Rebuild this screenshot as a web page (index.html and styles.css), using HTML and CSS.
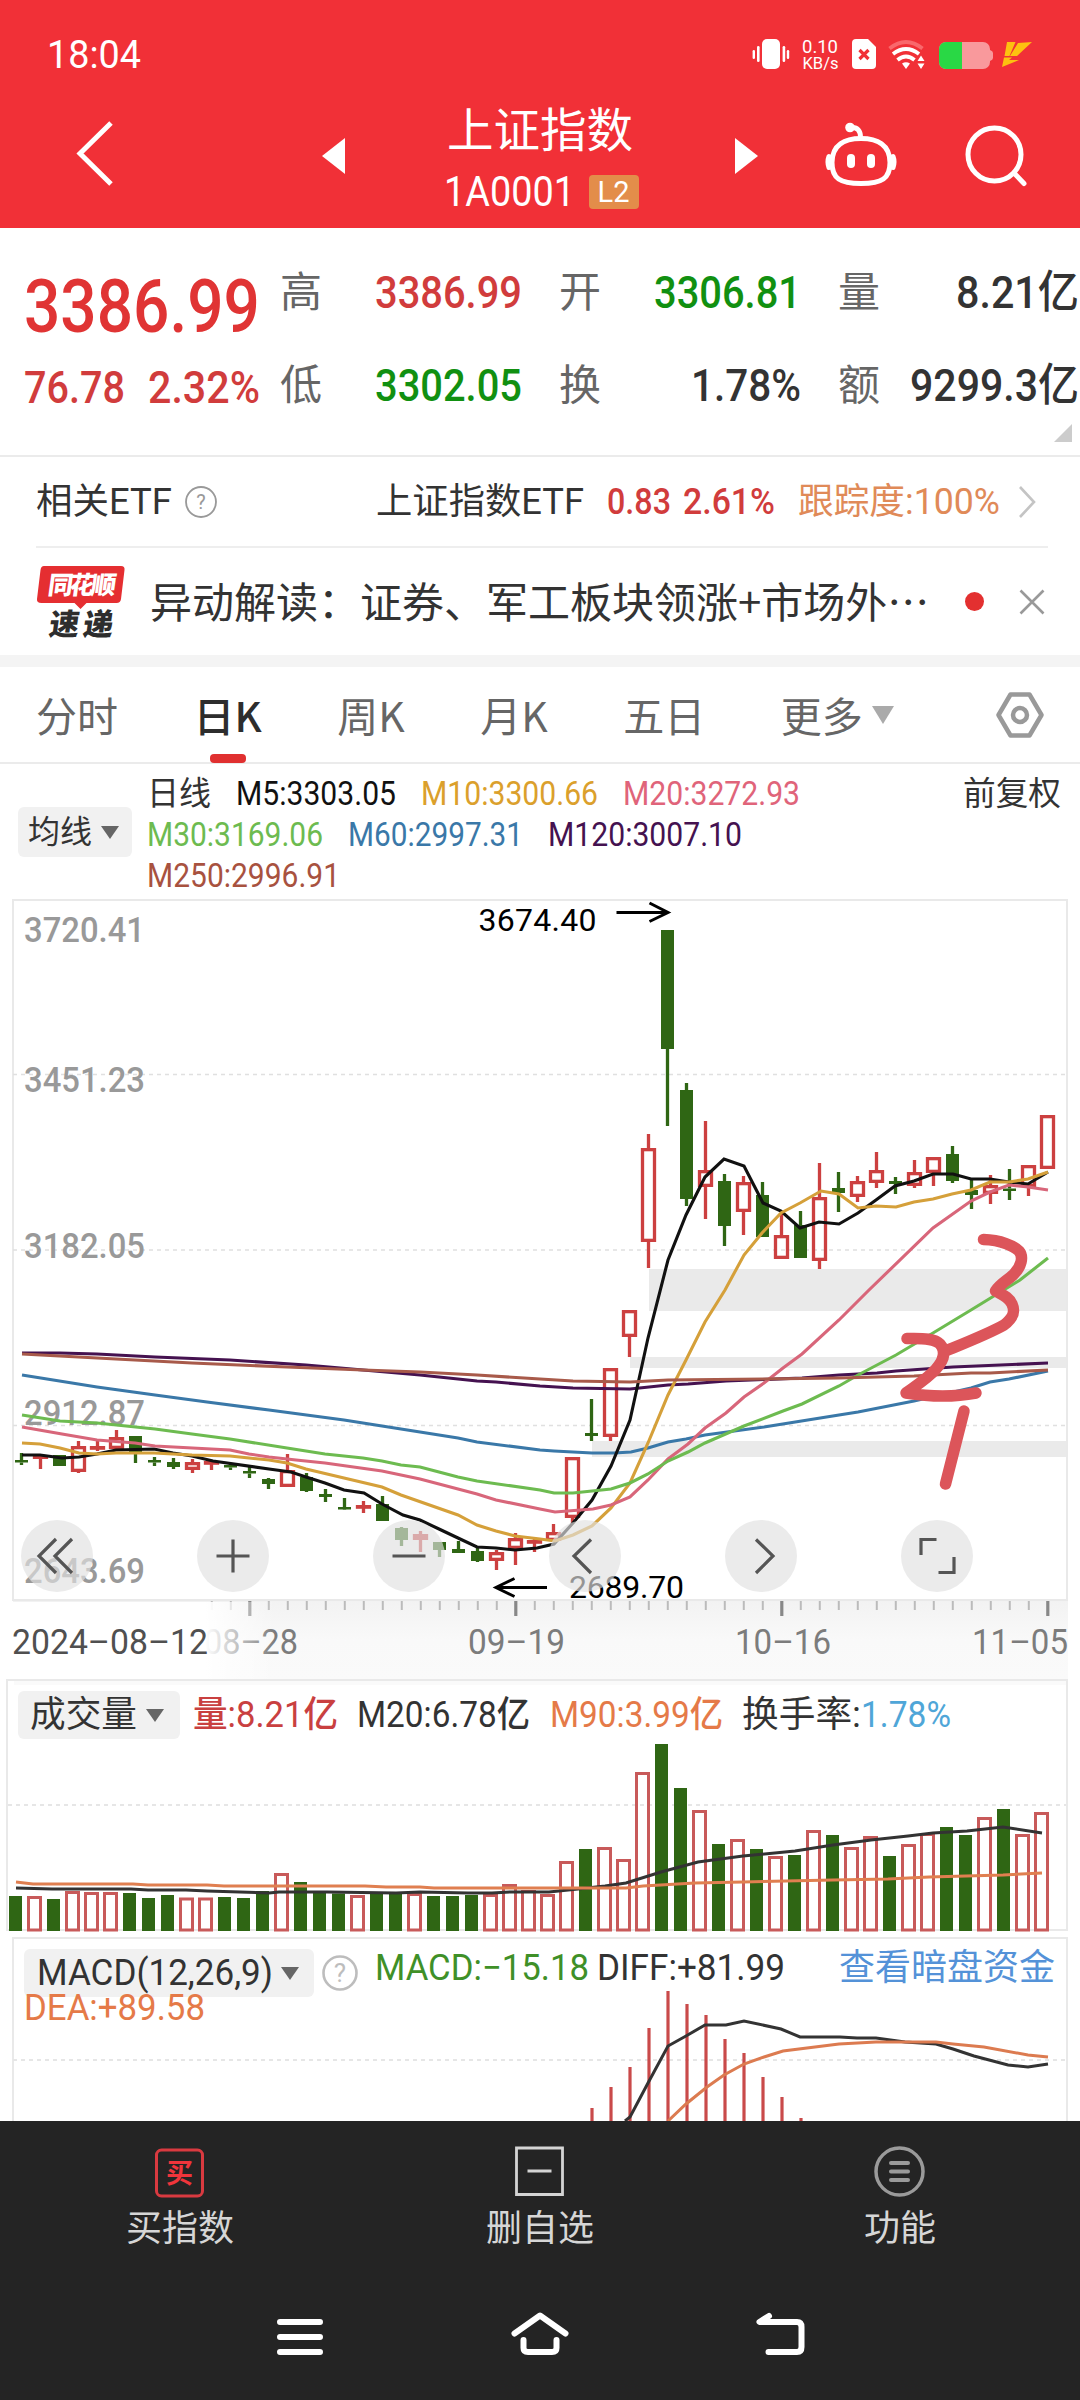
FILE: index.html
```html
<!DOCTYPE html>
<html lang="zh-CN">
<head>
  <meta charset="UTF-8">
  <title>上证指数</title>
  <link rel="stylesheet" href="styles.css">
</head>
<body>
  <header class="header">
    <div class="status-bar">
      <span class="clock" data-w="94">18:04</span>
      <svg class="status-icons" width="290" height="50" viewBox="750 30 290 50">
        <g fill="#fff">
          <rect x="762" y="39" width="18" height="30" rx="5"/>
          <rect x="757" y="46" width="2.6" height="16" rx="1.3"/>
          <rect x="752.6" y="50" width="2.4" height="9" rx="1.2"/>
          <rect x="782.6" y="46" width="2.6" height="16" rx="1.3"/>
          <rect x="786.8" y="50" width="2.4" height="9" rx="1.2"/>
          <text x="802" y="53" font-size="19" textLength="36" lengthAdjust="spacingAndGlyphs">0.10</text>
          <text x="802.500" y="69" font-size="16.500" textLength="36" lengthAdjust="spacingAndGlyphs">KB/s</text>
          <path d="M856 39h12l8 8v18a4 4 0 0 1-4 4h-16a4 4 0 0 1-4-4v-22a4 4 0 0 1 4-4z"/>
          <path d="M902 63.500l4 5.500 4-5.500q-4-2.500-8 0z"/>
          <path d="M921 55.500l3.500 5.500h-7zM921 69l3.500-5.500h-7z"/>
        </g>
        <path d="M859.500 50l9 9M868.500 50l-9 9" stroke="#f13037" stroke-width="3.200"/>
        <g fill="none" stroke="#fff" stroke-width="3.800">
          <path d="M889.500 48.500q16.500-13 33 0" stroke="#f9686c"/>
          <path d="M893 54q13-10 26 0"/>
          <path d="M897.500 60q8.500-7 17 0"/>
        </g>
        <rect x="939" y="42" width="51" height="27" rx="7" fill="#f9999c"/>
        <path d="M946 42h16v27h-16a7 7 0 0 1-7-7v-13a7 7 0 0 1 7-7z" fill="#29d845"/>
        <path d="M990 50q3 1 3 3v5q0 2-3 3z" fill="#f9999c"/>
        <path d="M1007 42h8.500l-6 14h-5zM1018 43l14-1-15 14h-7zM1004 57.500h8l-3 2.500h10l-17 7z" fill="#fdc010"/>
      </svg>
    </div>
    <div class="nav-row">
      <svg class="nav-left" width="360" height="100" viewBox="0 103 360 100">
        <path d="M111 123L80 153.500L111 184" fill="none" stroke="#fff" stroke-width="5"/>
        <path d="M345 138v36l-23-18z" fill="#fff"/>
      </svg>
      <div class="title">
        <div class="name">上证指数</div>
        <div class="code"><span data-w="131">1A0001</span><span class="level">L2</span></div>
      </div>
      <svg class="nav-right" width="360" height="100" viewBox="720 103 360 100">
        <path d="M735 138v36l23-18z" fill="#fff"/>
        <g fill="none" stroke="#fff" stroke-width="5" stroke-linecap="round">
          <path d="M861 138.500c16 0 29 6 29 24c0 16-8 21-29 21s-29-5-29-21c0-18 13-24 29-24z"/>
          <path d="M860.500 137c0-6-3-10-9-9.500"/>
          <path d="M829 156.500c-1.500 4-1.500 7 0 11M893 156.500c1.500 4 1.500 7 0 11"/>
          <circle cx="994.500" cy="154.500" r="26.500"/>
          <path d="M1014 173l10 10.500"/>
        </g>
        <circle cx="850" cy="127.500" r="4.800" fill="#fff"/>
        <rect x="847" y="154" width="8" height="14" rx="4" fill="#fff"/>
        <rect x="867" y="154" width="8" height="14" rx="4" fill="#fff"/>
      </svg>
    </div>
  </header>

  <section class="quote">
    <span class="price" data-w="236">3386.99</span>
    <span class="label">高</span><span class="value up" data-w="147">3386.99</span>
    <span class="label">开</span><span class="value down" data-w="147">3306.81</span>
    <span class="label">量</span><span class="value" data-w="123">8.21亿</span>
    <span class="change"><span data-w="101">76.78</span><span data-w="112">2.32%</span></span>
    <span class="label">低</span><span class="value down" data-w="147">3302.05</span>
    <span class="label">换</span><span class="value" data-w="110">1.78%</span>
    <span class="label">额</span><span class="value" data-w="169">9299.3亿</span>
    <i class="corner"></i>
  </section>

  <section class="etf">
    <span data-w="136">相关ETF</span>
    <svg class="help" width="34" height="34" viewBox="0 0 34 34"><circle cx="17" cy="17" r="15" fill="none" stroke="#999" stroke-width="1.800"/><text x="17" y="24" font-size="20" text-anchor="middle" fill="#999">?</text></svg>
    <span class="etf-name" data-w="208">上证指数ETF</span>
    <span class="etf-price" data-w="64">0.83</span>
    <span class="etf-rate" data-w="92">2.61%</span>
    <span class="etf-track" data-w="202">跟踪度:100%</span>
    <svg class="etf-more" width="20" height="36" viewBox="0 0 20 36"><path d="M2 3l14 15L2 33" fill="none" stroke="#c4c4c4" stroke-width="2.600"/></svg>
  </section>

  <section class="news">
    <svg class="logo" width="92" height="76" viewBox="35 563 92 76">
      <path d="M44 565h77q4 0 3.500 4l-3.500 29q-.5 4-4.500 4h-30l-6 6-6-6h-33q-5 0-4.500-4l3.500-29q.5-4 3.500-4z" fill="#e52e31"/>
      <g font-weight="900" font-family="Noto Sans CJK SC">
        <text transform="translate(47 593) skewX(-8)" font-size="25" textLength="68" fill="#fff">同花顺</text>
        <text transform="translate(48 634) skewX(-8)" font-size="30" textLength="64" fill="#2d2d2d">速递</text>
      </g>
    </svg>
    <span class="news-text">异动解读：证券、军工板块领涨+市场外⋯</span>
    <i class="dot"></i>
    <svg class="close" width="26" height="26" viewBox="0 0 26 26"><path d="M1.500 1.500l23 23M24.500 1.500l-23 23" stroke="#999" stroke-width="2.600"/></svg>
  </section>

  <nav class="tabs">
    <span class="tab">分时</span>
    <span class="tab active">日K</span>
    <span class="tab">周K</span>
    <span class="tab">月K</span>
    <span class="tab">五日</span>
    <span class="tab more">更多<i class="tri"></i></span>
    <svg class="setting" width="50" height="48" viewBox="0 0 50 48"><path d="M15.500 3.500h19L46.500 24L34.500 44.500h-19L3.500 24z" fill="none" stroke="#999" stroke-width="4.500" stroke-linejoin="round"/><circle cx="25" cy="24" r="7" fill="none" stroke="#999" stroke-width="4.500"/></svg>
  </nav>

  <section class="legend">
    <span class="pill ma-pill">均线<i class="tri dark"></i></span>
    <div class="ma-list">
      <div class="ma-row"><span class="c-day" data-w="64">日线</span><span class="c5" data-w="160">M5:3303.05</span><span class="c10" data-w="177">M10:3300.66</span><span class="c20" data-w="177">M20:3272.93</span></div>
      <div class="ma-row"><span class="c30" data-w="176">M30:3169.06</span><span class="c60" data-w="175">M60:2997.31</span><span class="c120" data-w="194">M120:3007.10</span></div>
      <div class="ma-row"><span class="c250" data-w="193">M250:2996.91</span></div>
    </div>
    <span class="adjust" data-w="98">前复权</span>
  </section>

  <section class="kline">
    <svg width="1080" height="780" viewBox="0 899 1080 780">
      <defs>
        <linearGradient id="axisX"><stop offset="0" stop-color="#fff"/><stop offset=".195" stop-color="#fff"/><stop offset=".265" stop-color="#fff" stop-opacity="0"/></linearGradient>
        <linearGradient id="axisY" x2="0" y2="1"><stop offset="0" stop-color="#f2f2f2"/><stop offset=".5" stop-color="#f9f9f9"/><stop offset="1" stop-color="#fafafa"/></linearGradient>
      </defs>
      <rect x="13" y="1600" width="1055" height="79" fill="url(#axisY)"/>
      <g fill="#eaeaea">
        <rect x="649" y="1269" width="419" height="42"/>
        <rect x="630" y="1357" width="438" height="11"/>
        <rect x="592" y="1441" width="476" height="16"/>
      </g>
      <rect x="13" y="900" width="1054" height="700" fill="none" stroke="#e9e9e9" stroke-width="2"/>
      <path d="M13 1074.500H1066M13 1250H1066M13 1425.500H1066" stroke="#e0e0e0" stroke-width="1.500" stroke-dasharray="4 4"/>
      <g font-size="35.500" font-weight="500" fill="#999">
        <text x="24" y="942" textLength="121" lengthAdjust="spacingAndGlyphs">3720.41</text>
        <text x="24" y="1092" textLength="121" lengthAdjust="spacingAndGlyphs">3451.23</text>
        <text x="24" y="1258" textLength="121" lengthAdjust="spacingAndGlyphs">3182.05</text>
        <text x="24" y="1425" textLength="121" lengthAdjust="spacingAndGlyphs">2912.87</text>
        <text x="24" y="1583" textLength="121" lengthAdjust="spacingAndGlyphs">2643.69</text>
      </g>
      <g id="candles"></g>
      <g id="averages"></g>
      <g font-size="32" fill="#000">
        <text x="478.500" y="931" textLength="118">3674.40</text>
        <text x="569" y="1598" textLength="115">2689.70</text>
      </g>
      <path d="M616.500 912.500H667M649.500 903L668 912.500L649.500 921.500M547 1587.500H497M514.500 1578.500L496 1587.500L514.500 1596.500" fill="none" stroke="#000" stroke-width="3"/>
      <g fill="none" stroke="#dc555a" stroke-width="11.500" stroke-linecap="round" stroke-linejoin="round">
        <path d="M983.500 1239.500C1001 1240 1014 1246 1019 1251C1024 1257 1021 1267 1014 1274C1007 1281 1001 1283 995.500 1291C1003 1295 1009 1297 1012 1304C1016 1313 1012 1319 1004 1325C990 1333 970 1341 948 1350"/>
        <path d="M907 1338.500C925 1338 935 1339 940 1344C947 1352 943 1361 936 1369C928 1378 917 1385 906 1393C925 1396 950 1398 976 1393"/>
        <path d="M964 1411L945.500 1484"/>
      </g>
      <g id="ticks"></g>
      <g font-size="35.500" font-weight="450" fill="#7c7c7c">
        <text x="204" y="1654" textLength="94" lengthAdjust="spacingAndGlyphs">08–28</text>
        <text x="468" y="1654" textLength="97" lengthAdjust="spacingAndGlyphs">09–19</text>
        <text x="735" y="1654" textLength="96" lengthAdjust="spacingAndGlyphs">10–16</text>
        <text x="972" y="1654" textLength="96" lengthAdjust="spacingAndGlyphs">11–05</text>
      </g>
      <rect x="10" y="1602" width="1000" height="77" fill="url(#axisX)"/>
      <text x="12" y="1654" font-size="35.500" font-weight="450" fill="#505050" textLength="196" lengthAdjust="spacingAndGlyphs">2024–08–12</text>
    </svg>
    <div class="tools">
      <svg class="tool" viewBox="0 0 72 72"><path d="M35 19L18 36L35 53M51 19L34 36L51 53"/></svg>
      <svg class="tool" viewBox="0 0 72 72"><path d="M36 19.500V52.500M19.500 36H52.500"/></svg>
      <svg class="tool" viewBox="0 0 72 72"><path d="M19.500 36H52.500"/></svg>
      <svg class="tool" viewBox="0 0 72 72"><path d="M42 19.500L25 36L42 53"/></svg>
      <svg class="tool" viewBox="0 0 72 72"><path d="M31 19.500L48 36L31 53"/></svg>
      <svg class="tool" viewBox="0 0 72 72"><path d="M20 35V19.500H35.500M53 37V52.500H37.500"/></svg>
    </div>
  </section>

  <section class="panel volume">
    <svg class="panel-bg" width="1080" height="258" viewBox="0 1679 1080 258">
      <rect x="14" y="1680" width="1053" height="5" fill="#fafafa"/>
      <rect x="7" y="1680" width="1060" height="250" fill="none" stroke="#e9e9e9" stroke-width="2"/>
      <path d="M8 1805H1066" stroke="#e6e6e6" stroke-width="2" stroke-dasharray="4 4"/>
      <g id="volumes"></g>
    </svg>
    <div class="panel-head">
      <span class="pill"><span data-w="107">成交量</span><i class="tri dark"></i></span>
      <span class="v1" data-w="145">量:8.21亿</span>
      <span class="v2" data-w="173">M20:6.78亿</span>
      <span class="v3" data-w="173">M90:3.99亿</span>
      <span class="v4" data-w="119">换手率:</span><span class="v5" data-w="90">1.78%</span>
    </div>
  </section>

  <section class="panel macd">
    <svg class="panel-bg" width="1080" height="184" viewBox="0 1937 1080 184">
      <path d="M13 2121V1938H1067V2121" fill="none" stroke="#e9e9e9" stroke-width="2"/>
      <path d="M13 2060H1066" stroke="#e6e6e6" stroke-width="2" stroke-dasharray="4 4"/>
      <g id="macd"></g>
    </svg>
    <div class="panel-head">
      <span class="pill"><span data-w="236">MACD(12,26,9)</span><i class="tri dark"></i></span>
      <svg class="help" width="36" height="36" viewBox="0 0 36 36"><circle cx="18" cy="18" r="16.500" fill="none" stroke="#bdbdbd" stroke-width="2.600"/><text x="18" y="27" font-size="26" text-anchor="middle" fill="#bdbdbd">?</text></svg>
      <span class="m1" data-w="214">MACD:−15.18</span>
      <span class="m2" data-w="188">DIFF:+81.99</span>
      <span class="m3">查看暗盘资金</span>
    </div>
    <div class="dea"><span data-w="181">DEA:+89.58</span></div>
  </section>

  <footer class="footer">
    <div class="actions">
      <div class="action">
        <svg width="56" height="56" viewBox="0 0 56 56"><rect x="4.500" y="6" width="46" height="46" rx="5" fill="none" stroke="#d93a40" stroke-width="3"/><text x="27.500" y="39" font-size="27" font-weight="700" text-anchor="middle" fill="#f0353b">买</text></svg>
        <span>买指数</span>
      </div>
      <div class="action">
        <svg width="56" height="56" viewBox="0 0 56 56"><path d="M4.500 4h46v46.500h-46zM15.500 27h24" fill="none" stroke="#d4d4d4" stroke-width="2.800"/></svg>
        <span>删自选</span>
      </div>
      <div class="action">
        <svg width="56" height="56" viewBox="0 0 56 56"><g fill="none" stroke="#9a9a9a" stroke-width="3.500"><circle cx="27.500" cy="27.500" r="23.500"/><path d="M19 19h17M19 27.500h17M19 36h17" stroke-width="4" stroke-linecap="round"/></g></svg>
        <span>功能</span>
      </div>
    </div>
    <svg class="sys-nav" width="1080" height="70" viewBox="0 2300 1080 70" fill="none" stroke="#fff" stroke-width="6" stroke-linecap="round" stroke-linejoin="round">
      <path d="M280 2322H320M280 2337H320M280 2352H320"/>
      <path d="M514.500 2333.500L540 2315.500L565.500 2333.500M523.500 2340V2348Q523.500 2352 528 2352H552Q556.500 2352 556.500 2348V2340"/>
      <path d="M769 2316L759.500 2322H797Q801.500 2322 801.500 2327V2347Q801.500 2352 797 2352H768.500"/>
    </svg>
  </footer>

  <script src="chart.js"></script>
</body>
</html>
```

FILE: styles.css
```css
* {
  box-sizing: border-box;
}
body {
  margin: 0;
  width: 1080px;
  height: 2400px;
  overflow: hidden;
  background: #fff;
  color: #333;
  font-family: Roboto, "Noto Sans CJK SC", sans-serif;
}
svg {
  display: block;
  flex: none;
}
span {
  white-space: nowrap;
}
[data-w] {
  display: inline-block;
  flex: none;
}

/* header */
.header {
  height: 228px;
  background: #f13037;
  color: #fff;
}
.status-bar {
  display: flex;
  justify-content: space-between;
  height: 103px;
  padding: 30px 40px 0 47px;
}
.clock {
  font-size: 38px;
  line-height: 50px;
}
.nav-row {
  display: flex;
}
.title {
  width: 360px;
  padding-top: 3px;
  text-align: center;
}
.name {
  font-size: 46.5px;
  line-height: 50px;
}
.code {
  display: flex;
  align-items: center;
  justify-content: center;
  gap: 14px;
  height: 72px;
  padding-left: 2px;
  font-size: 42px;
  font-weight: 450;
  line-height: 72px;
}
.level {
  width: 50px;
  height: 34px;
  border-radius: 4px;
  background: #e38d4a;
  font-size: 29px;
  font-weight: 400;
  line-height: 35px;
}

/* quote */
.quote {
  position: relative;
  display: grid;
  grid-template-columns: 254px 60px 182px 97px 182px 97px 181px;
  grid-template-rows: 93px 93px;
  height: 229px;
  padding: 18px 0 0 26px;
  border-bottom: 2px solid #ebebeb;
  font-size: 45px;
  font-weight: 500;
  line-height: 93px;
}
.price {
  justify-self: start;
  margin-left: -2px;
  padding-top: 29px;
  color: #e03434;
  font-size: 74px;
  line-height: 64px;
}
.change {
  display: flex;
  gap: 23px;
  margin-left: -2px;
  color: #d13c3c;
  font-size: 44px;
  line-height: 98px;
}
.label {
  color: #666;
  font-size: 42px;
  font-weight: 400;
}
.value + .label {
  padding-left: 37px;
}
.value {
  justify-self: end;
}
.up {
  color: #d13c3c;
}
.down {
  color: #119011;
}
.corner {
  position: absolute;
  right: 8px;
  bottom: 13px;
  border-left: 18px solid transparent;
  border-bottom: 18px solid #ccc;
}

/* etf */
.etf {
  display: flex;
  align-items: center;
  height: 91px;
  margin: 0 32px 0 36px;
  border-bottom: 2px solid #eee;
  font-size: 36px;
  line-height: 94px;
}
.etf .help {
  margin: 0 158px 0 12px;
}
.etf-price,
.etf-rate {
  color: #d13c3c;
  font-weight: 500;
}
.etf-price {
  margin-left: 23px;
}
.etf-rate {
  margin-left: 12px;
}
.etf-track {
  margin-left: 23px;
  color: #e08a58;
}
.etf-more {
  margin-left: 18px;
}

/* news */
.news {
  display: flex;
  align-items: center;
  height: 107px;
  padding: 0 35px;
}
.news-text {
  width: 800px;
  margin: -3px 0 0 23px;
  font-family: "Noto Sans CJK SC", sans-serif;
  font-size: 42px;
  line-height: 60px;
}
.dot {
  width: 19px;
  height: 19px;
  margin-left: 16px;
  border-radius: 50%;
  background: #e33030;
}
.close {
  margin-left: 35px;
}

/* tabs */
.tabs {
  display: flex;
  align-items: center;
  height: 109px;
  padding: 0 35px 0 36px;
  border-top: 12px solid #f4f4f4;
  border-bottom: 2px solid #ebebeb;
  color: #666;
  font-family: "Noto Sans CJK SC", sans-serif;
  font-size: 41px;
  line-height: 95px;
}
.tab {
  position: relative;
  margin-right: 75.5px;
}
.tab.active {
  color: #2d2d2d;
  font-weight: 500;
}
.tab.active::after {
  content: "";
  position: absolute;
  left: 16px;
  bottom: -1px;
  width: 36px;
  height: 9px;
  border-radius: 4px;
  background: #e03030;
}
.tri {
  display: inline-block;
  border: 11px solid transparent;
  border-top: 18px solid #aaa;
  border-bottom: 0;
}
.tri.dark {
  border-width: 13px 9px 0;
  border-top-color: #666;
}
.more {
  display: flex;
  align-items: center;
  gap: 9px;
  margin-right: 0;
}
.setting {
  margin-left: auto;
}

/* legend */
.pill {
  display: flex;
  align-items: center;
  border-radius: 6px;
  background: #f1f1f1;
}
.legend {
  display: flex;
  height: 135px;
  padding: 9px 18px 0;
  font-size: 33px;
  line-height: 41px;
}
.ma-pill {
  gap: 9px;
  width: 114px;
  height: 50px;
  margin-top: 34px;
  padding-left: 10px;
  font-size: 32px;
}
.ma-list {
  width: 831px;
  padding-left: 15px;
}
.ma-row {
  display: flex;
  gap: 25px;
  font-weight: 450;
}
.c-day {
  font-weight: 400;
}
.c5 { color: #111; }
.c10 { color: #dba02c; }
.c20 { color: #e0647a; }
.c30 { color: #6dbb50; }
.c60 { color: #3a78a8; }
.c120 { color: #451250; }
.c250 { color: #a8523f; }

/* kline */
.kline {
  position: relative;
  height: 780px;
}
.tools {
  position: absolute;
  left: 21px;
  top: 621px;
  display: flex;
  gap: 104px;
}
.tool {
  width: 72px;
  height: 72px;
  border-radius: 50%;
  background: rgba(224, 224, 224, 0.66);
  fill: none;
  stroke: #555;
  stroke-width: 3.2;
}

/* volume, macd */
.panel {
  position: relative;
}
.panel-bg {
  position: absolute;
  left: 0;
  top: 0;
}
.panel-head {
  position: relative;
  display: flex;
  font-size: 36px;
  line-height: 49px;
}
.volume {
  height: 258px;
  padding: 12px 0 0 18px;
}
.volume .pill {
  gap: 9px;
  width: 162px;
  height: 48px;
  padding-left: 12px;
}
.v1 {
  margin-left: 13px;
  color: #c94040;
}
.v2 {
  margin-left: 19px;
}
.v3 {
  margin-left: 20px;
  color: #e57a48;
}
.v4 {
  margin-left: 19px;
}
.v5 {
  color: #4fa6d8;
}
.v1,
.v2,
.v3,
.v5,
.m1,
.m2,
.dea {
  font-weight: 450;
}
.macd {
  height: 184px;
  padding: 12px 0 0 24px;
}
.macd .pill {
  gap: 8px;
  width: 290px;
  height: 48px;
  padding-left: 13px;
}
.macd .panel-head {
  height: 35px;
}
.macd .help {
  margin: 6px 0 0 8px;
}
.m1,
.m2,
.m3 {
  margin-top: -5px;
}
.m1 {
  margin-left: 17px;
  color: #3f9028;
}
.m2 {
  margin-left: 8px;
}
.m3 {
  margin-left: 54px;
  color: #5492d8;
}
.dea {
  position: relative;
  color: #e57a48;
  font-size: 36px;
  line-height: 48px;
}

/* footer */
.footer {
  height: 279px;
  background: #242424;
}
.actions {
  display: flex;
  padding-top: 23px;
}
.action {
  display: flex;
  flex: 1;
  flex-direction: column;
  align-items: center;
  color: #d6d6d6;
  font-size: 36px;
  line-height: 59px;
}
.sys-nav {
  margin-top: 41px;
}
```

FILE: chart.js
```js
// [up, high, bodyTop, bodyBottom, low]
const candles = [
  [0,1453,1460,1462.5,1465],[1,1454,1455,1459,1469],[0,1455,1455,1466,1466],[1,1441,1446,1472,1473],[1,1441,1446,1448,1451],
  [1,1430,1437,1449,1450],[0,1436,1436,1454,1463],[0,1457,1460,1462.5,1466],[0,1458,1462,1467,1469],[1,1459,1462,1470,1473],
  [1,1460,1461,1463,1470],[0,1463,1465,1467.5,1470],[0,1467,1471,1473.5,1478],[0,1478,1479,1484,1489],[1,1454,1470,1487,1487],
  [0,1473,1477,1491,1492],[0,1489,1494,1497,1502],[0,1498,1507,1509.5,1510],[1,1501,1505,1508,1513],[0,1496,1504,1521,1521],
  [0,1527,1528,1540,1546],[1,1531,1534,1540,1552],[0,1542,1542,1550,1557],[0,1541,1549,1553,1553],[0,1548,1551,1561,1562],
  [1,1550,1552,1561,1570],[1,1533,1538,1549,1565],[1,1537,1540,1543,1552],[1,1524,1532,1541,1541],[1,1457,1457,1518,1523],
  [0,1399,1433,1436,1441],[1,1368,1368,1437,1441],[1,1310,1310,1337,1357],[1,1134,1148,1242,1268],[0,930,930,1049,1126],
  [0,1083,1090,1199,1206],[1,1121,1170,1187,1219],[0,1174,1181,1226,1246],[1,1176,1182,1212,1235],[0,1182,1195,1237,1237],
  [1,1213,1235,1259,1259],[0,1211,1225,1258,1258],[1,1163,1197,1261,1269],[0,1172,1188,1193,1212],[1,1176,1181,1197,1202],
  [1,1152,1170,1183,1188],[0,1177,1181,1184,1194],[1,1160,1172,1186,1188],[1,1157,1157,1173,1186],[0,1146,1154,1181,1183],
  [0,1179,1190,1195,1209],[1,1175,1185,1194,1204],[0,1169,1188.5,1191,1200],[1,1165,1165,1187,1196],[1,1115,1115,1169,1169]
];

const averages = {
  '#3a78a8': '22,1375 97,1387 155,1395 207,1402 269,1410 344,1420 401,1429 458,1438 477,1442 540,1450 554,1451 592,1453 614,1453 631,1452 648,1448 668,1442 686,1439 705,1435 764,1427 839,1415 858,1412 914,1401 971,1388 990,1382 1009,1379 1048,1371',
  '#451250': '22,1353 60,1353 97,1354 155,1357 230,1360 306,1365 363,1370 420,1375 477,1381 496,1382 540,1386 573,1388 630,1389 668,1385 688,1384 726,1381 802,1378 839,1375 877,1373 896,1371 953,1367 1048,1363',
  '#111': '22,1455 40,1455 62,1458 79,1457 97,1454 116,1450 154,1449 173,1453 192,1456 213,1461 269,1469 291,1472 306,1477 325,1483 344,1490 364,1493 382,1504 403,1515 420,1520 439,1529 458,1538 477,1547 496,1548 515,1550 537,1548 554,1544 573,1523 592,1500 611,1466 630,1420 648,1338 668,1260 686,1215 705,1177 724,1159 744,1166 763,1203 781,1211 800,1228 819,1222 839,1224 858,1213 876,1200 895,1186 914,1181 933,1174 953,1174 971,1179 990,1179 1009,1182 1028,1184 1048,1172',
  '#d5a03a': '22,1443 40,1444 60,1448 79,1453 97,1454 116,1453 154,1453 192,1455 230,1456 249,1458 269,1460 287,1463 306,1469 344,1478 382,1487 401,1495 458,1515 477,1525 496,1531 515,1536 540,1539 555,1541 573,1535 592,1526 611,1508 630,1483 648,1443 668,1395 686,1360 705,1322 725,1290 744,1255 762,1233 781,1213 800,1203 821,1191 839,1194 858,1208 876,1206 896,1207 914,1202 933,1199 952,1194 971,1190 990,1182 1009,1182 1028,1179 1048,1172',
  '#d8667a': '22,1427 62,1434 97,1440 135,1443 155,1446 230,1450 249,1454 269,1457 296,1460 325,1463 382,1471 420,1479 477,1494 496,1500 540,1509 555,1512 593,1509 611,1505 630,1497 648,1480 668,1459 688,1444 705,1428 726,1413 744,1397 764,1383 783,1368 802,1354 839,1320 869,1290 933,1228 971,1201 990,1192 1009,1185 1028,1187 1048,1190',
  '#6dbb50': '22,1415 60,1421 97,1423 155,1429 192,1434 230,1439 287,1448 325,1454 363,1458 382,1461 401,1465 420,1467 439,1472 458,1477 477,1481 540,1490 554,1493 573,1493 611,1489 630,1483 648,1474 668,1461 688,1452 705,1443 744,1426 783,1411 802,1404 839,1386 858,1375 896,1355 933,1333 971,1310 1020,1280 1048,1258',
  '#a85a4a': '22,1354 116,1359 192,1363 287,1367 363,1370 420,1372 477,1375 540,1379 573,1381 630,1382 668,1380 764,1379 839,1378 914,1376 971,1373 990,1373 1048,1370'
};

const volumeTops = [
  1896,1896,1899,1891,1892,1892,1893,1898,1895,1897.5,1897.5,1897,1898,1891,1873,1882,1892,1893.5,1895,1893,
  1893,1893,1896,1896,1895,1894,1884,1890,1894,1861,1849,1847,1859,1772,1744,1788,1810,1844,1839,1849,
  1856,1855,1830,1835,1847,1836,1856,1844,1833,1827,1835,1817,1809,1834,1812
];
const volumeUp = '0101110001100010001001000111110111001010101011011001011'.split('').map(Number);
const volumeLines = {
  '#333': '16,1888 52,1889 131,1889 148,1890 186,1890 207,1891 269,1893 279,1892 327,1892 396,1893 420,1892 468,1893 492,1893 510,1892 549,1892 578,1889 605,1886 626,1883 661,1872 698,1862 743,1856 795,1851 833,1845 871,1840 908,1836 933,1833 967,1831 1003,1827 1042,1833',
  '#e07f50': '16,1882 33,1884 133,1884 148,1885 207,1885 224,1886 365,1886 386,1887 420,1887 434,1888 626,1888 643,1886 695,1883 743,1882 833,1880 888,1879 929,1877 1003,1875 1042,1873'
};

const macdTops = [2108,2087,2067,2028,1991,2004,2015,2039,2053,2077,2097,2118];
const macdLines = {
  '#333': '625,2121 630,2117 648,2083 668,2046 686,2036 705,2025 726,2025 744,2021 781,2029 800,2037 840,2037 857,2038 876,2038 905,2042 936,2044 953,2049 974,2056 1008,2065 1028,2067 1048,2064',
  '#dc7b50': '668,2121 686,2104 707,2087 724,2075 744,2064 764,2057 783,2051 839,2044 876,2042 936,2042 953,2044 984,2047 1028,2055 1048,2057'
};

const STEP = 19;
const GREEN = '#2f6614';
const RED = '#cc4040';

function put(id, html) {
  document.getElementById(id).innerHTML = html;
}

function lines(set, width) {
  return Object.entries(set).map(([color, points]) =>
    `<polyline points="${points}" fill="none" stroke="${color}" stroke-width="${width}"/>`).join('');
}

function hollow(x, top, bottom, color, width) {
  const h = Math.max(bottom - top - width, 0.5);
  return `<rect x="${x - 6}" y="${top + width / 2}" width="12" height="${h}" fill="none" stroke="${color}" stroke-width="${width}"/>`;
}

function solid(x, top, bottom) {
  return `<rect x="${x - 6.5}" y="${top}" width="13" height="${bottom - top}" fill="${GREEN}"/>`;
}

put('candles', candles.map(([up, high, top, bottom, low], i) => {
  const x = 21.5 + i * STEP;
  const color = up ? RED : GREEN;
  const wick = `<path d="M${x} ${high}V${top}M${x} ${bottom}V${low}" stroke="${color}" stroke-width="3.3"/>`;
  return wick + (up ? hollow(x, top, bottom, color, 3.3) : solid(x, top, bottom));
}).join(''));
put('averages', lines(averages, 3.1));

let ticks = '';
for (let i = 10; i < 55; i++) {
  const x = 21.8 + i * STEP;
  const major = (i - 12) % 14 === 0;
  ticks += `<path d="M${x} 1601V${major ? 1616 : 1610}" stroke="${major ? '#888' : '#bbb'}" stroke-width="${major ? 3.2 : 2}"/>`;
}
put('ticks', ticks);

put('volumes', volumeTops.map((top, i) => {
  const x = 15.5 + i * STEP;
  return volumeUp[i] ? hollow(x, top, 1931.5, '#c85a5a', 3) : solid(x, top, 1931);
}).join('') + lines(volumeLines, 3));

put('macd', macdTops.map((top, i) =>
  `<path d="M${592 + i * STEP} ${top}V2121" stroke="#c94a4a" stroke-width="3.2"/>`).join('') + lines(macdLines, 3));

document.querySelectorAll('[data-w]').forEach(el => {
  const natural = el.getBoundingClientRect().width;
  const target = Number(el.dataset.w);
  el.style.width = natural + 'px';
  el.style.marginRight = (target - natural) + 'px';
  el.style.transformOrigin = 'left';
  el.style.transform = `scaleX(${target / natural})`;
});
```
